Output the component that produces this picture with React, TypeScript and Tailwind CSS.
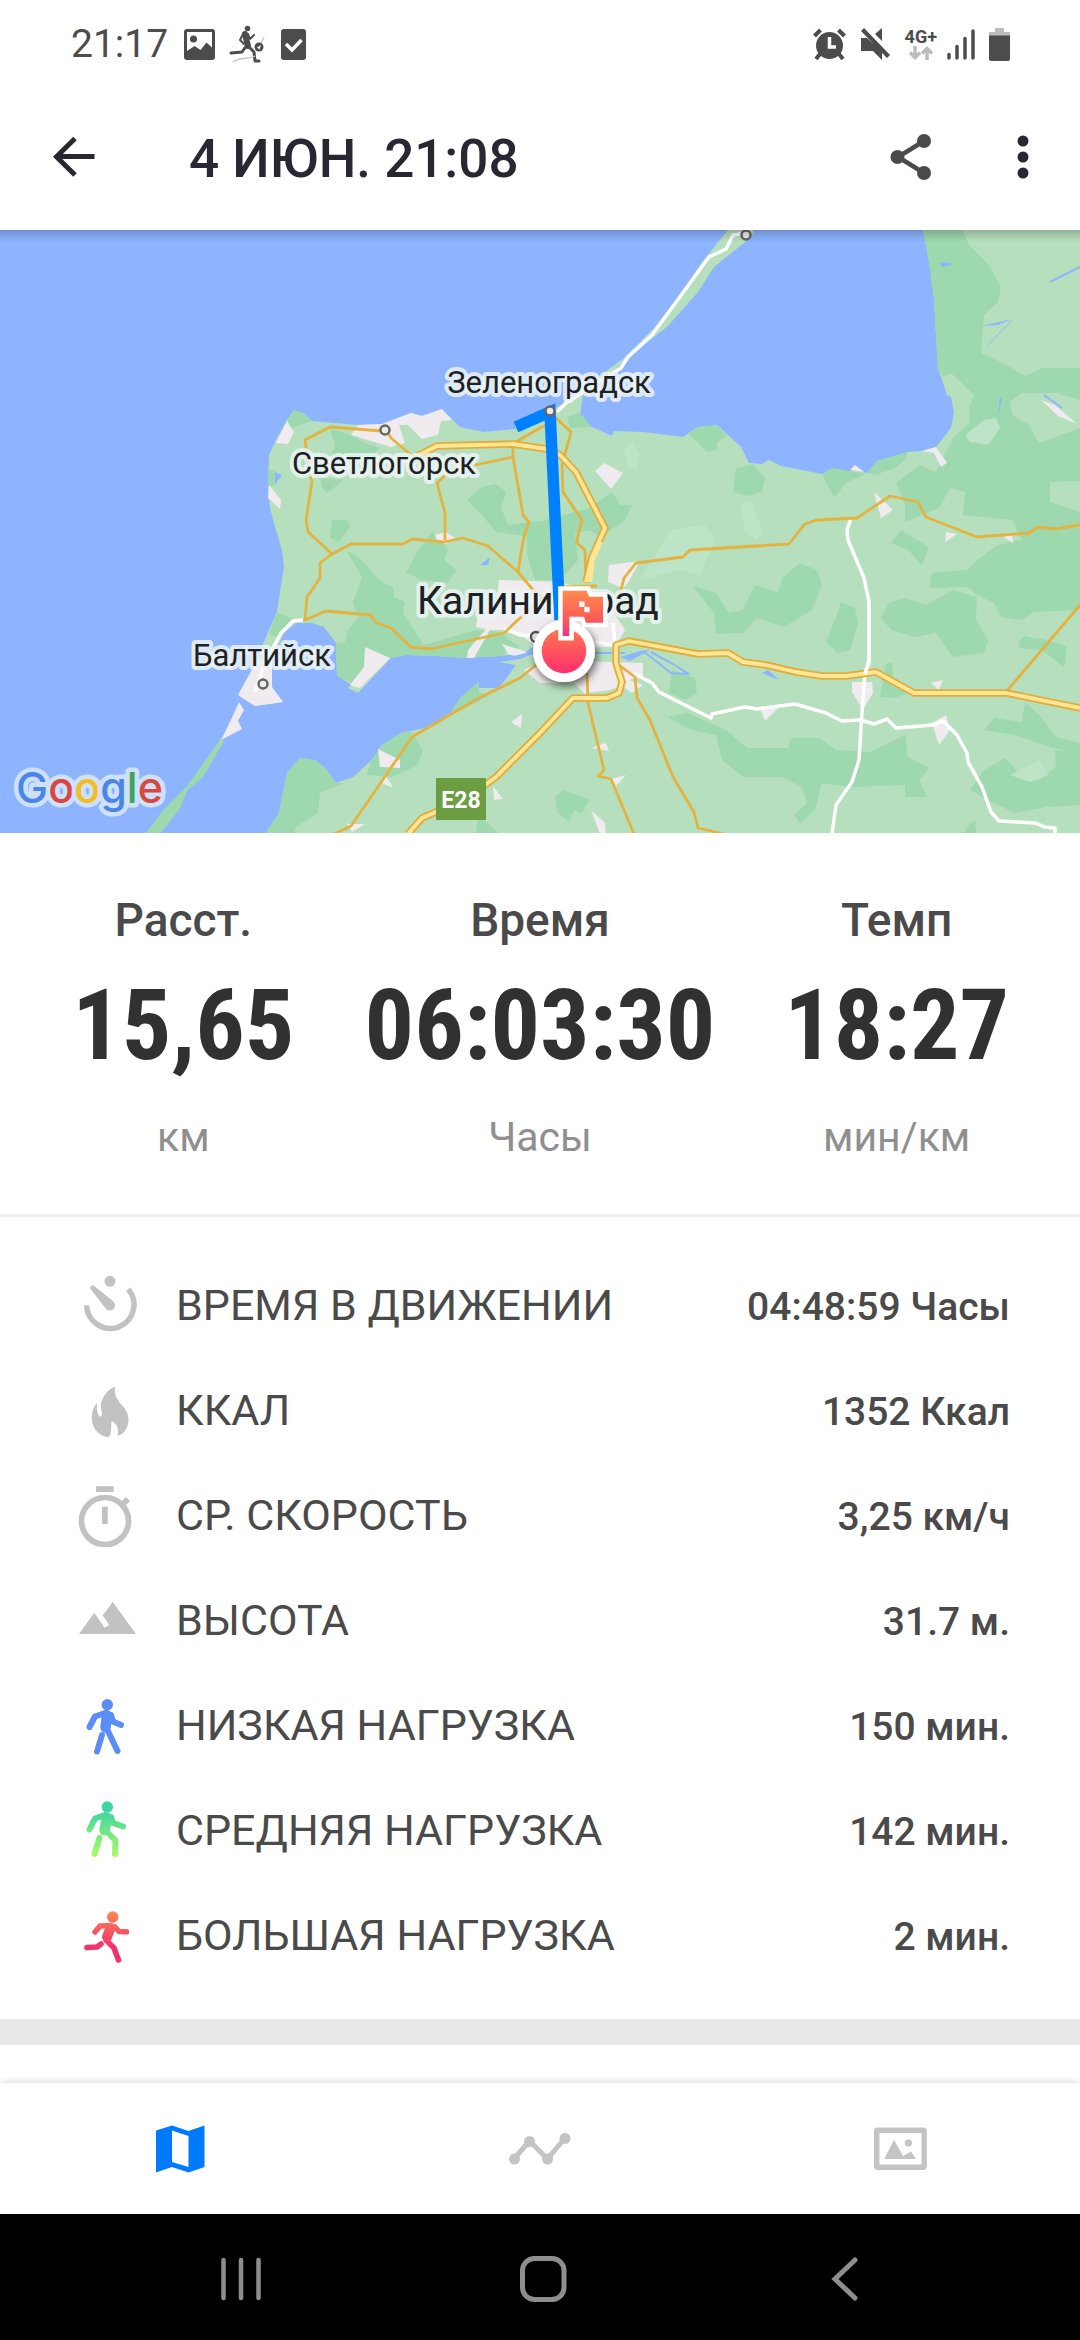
import React from 'react';

const FORESTS = [
  '294,180 303,183 312,191 296,196 287,203 288,190',
  '330,199 351,205 365,213 380,218 372,225 350,232 330,232 335,215',
  '482,257 496,254 506,262 501,278 508,295 530,292 555,290 550,310 496,302 482,285 467,270',
  '346,320 362,330 379,350 393,357 394,367 405,372 403,383 424,415 448,408 475,400 499,402 520,417 499,426 465,428 437,426 406,425 391,428 365,418 364,443 351,453 337,445 336,413 345,412 348,400 358,387 353,372 362,347',
  '417,322 432,302 439,308 448,320 444,330 456,340 448,353 422,350 406,343',
  '527,297 545,290 590,278 612,262 620,275 632,275 625,290 600,307 590,300 575,303 578,330 560,350 535,350 527,325',
  '688,203 698,197 717,195 727,206 717,212 717,220 707,222',
  '736,238 753,235 765,248 762,262 747,266 733,262',
  '822,244 833,238 855,242 865,244 846,253 834,268',
  '867,243 877,231 908,222 905,230 895,238 875,245',
  '923,0 962,0 969,15 989,35 1001,57 998,72 984,85 981,123 1003,133 1025,146 1043,138 1080,138 1080,170 1056,163 1022,163 1010,172 1012,185 1029,195 1039,213 1080,198 1080,251 1050,252 1050,272 1080,282 1080,380 1034,382 1022,390 1001,387 994,373 977,365 967,357 929,358 932,343 967,340 977,330 998,315 1022,310 1012,290 963,285 965,262 950,258 939,278 905,292 905,275 896,253 919,235 936,242 953,208 970,192 969,178 974,165 951,143 943,147 938,138 936,105 934,68 929,32',
  '783,347 800,333 817,340 822,355 812,380 784,397 757,388 743,403 716,404 714,383 693,356 716,363 729,383 743,380 755,355 778,362',
  '838,382 841,372 855,378 858,393 850,420 838,423 826,412',
  '881,388 889,373 905,368 926,375 953,360 977,367 976,390 988,410 984,423 953,427 936,403 915,407 891,400',
  '667,487 688,483 726,500 747,518 788,518 791,508 819,508 836,520 870,522 905,505 908,527 929,538 919,550 927,567 905,567 905,555 850,557 822,553 815,580 800,593 794,585 807,573 802,557 781,547 743,547 722,530 716,505 691,500',
  '672,440 695,448 697,463 685,470 669,463',
  '984,540 1005,528 1022,547 1039,550 1056,537 1055,520 1080,522 1080,575 1046,577 1015,583 988,570 970,560',
  '984,500 994,488 1022,492 1025,472 1041,487 1056,507 1080,513 1080,525 1050,517 1015,505',
  '1018,412 1024,406 1046,410 1067,416 1064,438 1055,430 1042,420 1020,418',
  '891,313 901,300 912,307 929,317 922,335 908,320',
  '880,467 886,433 892,433 893,447 912,462 895,468',
  '555,567 564,560 590,570 581,583 574,580 569,592 557,582',
  '265,604 279,583 287,543 300,528 315,530 325,538 336,553 344,553 320,563 318,583 296,597 294,604',
  '382,515 401,503 411,502 423,520 418,535 392,547 366,545 372,530',
  '451,482 461,467 479,452 479,462 488,466 462,480',
  '332,290 348,290 350,297 344,305 339,312 330,308',
  '320,248 344,250 327,263 322,258',
  '277,382 293,389 279,407 269,405',
  '268,238 276,242 274,256 268,256',
  '567,187 580,183 592,197 570,198',
  '478,585 486,592 500,604 476,604',
  '963,604 968,596 975,590 977,604',
];

const MEADOWS = [
  '965,205 984,190 996,188 1000,198 988,215 970,212',
  '740,275 752,272 762,300 757,310 745,302',
  '624,220 633,210 640,225 636,240 628,236',
  '670,300 705,295 715,310 700,345 680,340 640,350 660,318',
  '1010,545 1040,530 1048,545 1030,552',
];

const TOWNS = [
  '287,191 294,202 288,214 276,213',
  '358,195 382,194 411,183 422,186 442,179 452,190 441,191 438,205 422,209 408,195 399,195 405,213 391,217 351,205',
  '269,255 281,270 280,279 268,268',
  '499,350 560,352 590,360 612,380 625,400 615,417 540,418 520,405 510,400 490,400 474,428 467,428 468,420 486,399 476,397 478,385 495,383',
  '524,440 545,430 643,433 643,446 629,450 643,455 632,463 622,456 610,460 588,463 587,466 574,453 540,453',
  '502,414 527,422 518,427 508,424',
  '609,335 640,331 628,353 623,358 608,352',
  '604,233 623,243 611,259 595,241',
  '365,417 390,428 360,458 350,455 364,437',
  '378,519 400,530 400,538 380,537',
  '258,430 272,430 272,457 283,472 255,476 238,465',
  '852,452 872,452 873,463 863,480 852,462',
  '932,493 946,485 950,500 939,515',
  '874,262 893,280 881,288',
  '922,221 936,217 947,233 941,237 934,223',
  '760,478 781,475 765,491',
  '591,518 606,513 609,521',
  '611,549 626,545 616,556',
  '591,580 605,593 606,604 600,604',
  '511,492 522,484 521,498',
  '1041,170 1055,175 1077,194 1058,186',
  '850,240 855,235 864,242',
  '384,543 393,557 383,554',
  '493,556 503,569 494,570',
  '347,594 365,594 352,602',
  '435,305 446,302 455,308 446,314 437,311',
  '931,453 943,450 939,460',
  '946,302 957,304 945,312',
  '1004,307 1012,303 1013,313',
  '239,472 244,480 238,491 242,499 221,510 230,492',
];

const ROADS = [
  '382,201 330,197 305,210 308,235 312,252 306,290 308,302 332,324',
  '303,390 305,390 307,367 320,348 320,333 332,324 351,314 403,314 412,309 444,312 463,308 488,316 518,342 533,360 552,374',
  '388,203 391,208 411,225',
  '513,227 475,235 451,240 437,253 445,283 445,310',
  '513,216 513,227 523,285 529,292 525,303 522,317 518,342',
  '514,213 540,198 556,190',
  '555,187 571,202 562,235 563,262 582,290 578,305 577,313 585,320 586,353',
  '305,390 326,381 370,385 377,393 391,398 411,417 430,419 504,403 520,388 540,370 560,357 597,356',
  '536,435 520,448 479,468 412,507 351,596 334,604',
  '621,360 624,348 636,333 683,327 690,320 789,314 800,300 805,294 817,290 857,288 890,266 918,272 926,287 977,307 1029,303 1038,297 1055,299 1080,295',
  '1006,462 1080,375',
  '587,443 588,473 604,540 598,546 611,549 634,604',
  '619,435 635,447 637,468 650,490 673,547 694,582 698,598 724,604',
];

const HIGHWAYS = [
  '417,226 437,216 513,214 540,218 547,219 560,225 576,242 605,298 592,327 586,352',
  '408,604 422,588 436,582 485,555 496,547 540,503 573,468 607,468 619,463 622,452 616,433 616,415 629,411 698,424 728,423 743,432 766,435 796,442 822,446 846,446 876,442 914,463 1006,463 1080,478',
];

const WHITE_ROADS = [
  '557,182 566,173 621,138 628,127 652,105 709,27 726,19 733,5 746,3',
  '851,288 847,300 848,310 864,348 869,372 869,433 865,443 862,482 859,530 852,552 836,575 832,604',
  '633,443 652,453 659,462 711,488 712,484 745,477 757,479 795,474 826,483 842,491 860,490 874,494 887,489 896,498 933,495 943,491 957,505 967,523 968,532 982,557 991,582 999,591 1036,593 1044,597 1055,598 1055,604',
  '613,393 615,415 595,412',
  '255,462 265,433 281,403 293,391 303,390',
  '504,399 520,405 545,407',
];

const LAND =
  '294,180 303,183 312,191 358,195 382,194 411,183 422,186 442,179 460,197 484,202 516,199 535,192 555,178 561,175 605,142 624,128 654,98 678,68 702,32 728,0 753,0 753,3 750,8 714,37 698,62 667,97 654,107 626,130 609,145 583,165 580,185 592,197 612,206 614,201 643,202 683,207 698,197 717,195 741,217 749,233 762,234 769,230 781,236 822,244 833,238 843,243 855,240 867,243 877,231 908,222 922,221 936,217 951,198 954,183 951,167 947,165 938,138 936,105 934,68 929,32 923,0 1080,0 1080,604 265,604 279,583 287,543 300,528 315,530 325,538 336,553 353,547 372,530 382,515 401,503 430,497 451,482 461,467 479,452 479,458 499,458 516,435 499,432 520,429 533,424 536,415 524,423 499,426 465,428 437,426 406,425 391,428 358,463 348,458 351,455 337,445 336,413 324,397 312,393 296,393 284,403 272,430 272,457 283,472 255,476 238,465 255,433 269,400 277,382 284,337 282,320 276,300 270,278 268,255 269,225 277,208 287,190';

const PLACES = [
  { name: 'Зеленоградск', x: 549, y: 163, size: 'text-[31px]' },
  { name: 'Светлогорск', x: 384, y: 244, size: 'text-[31px]' },
  { name: 'Балтийск', x: 262, y: 436, size: 'text-[31px]' },
  { name: 'Калининград', x: 538, y: 384, size: 'text-[39px]' },
];

const RouteMap: React.FC = () => (
  <svg viewBox="0 0 1080 603" className="block w-full bg-[#8eb4ff]" role="img" aria-label="Карта">
    <defs>
      <linearGradient id="marker" x1="0" y1="0" x2="0" y2="1">
        <stop offset="0" stopColor="#ff7a4d" />
        <stop offset="1" stopColor="#ff2e6f" />
      </linearGradient>
      <linearGradient id="flag" x1="0" y1="0" x2="0" y2="1">
        <stop offset="0" stopColor="#ff8a4f" />
        <stop offset="0.6" stopColor="#fb5c55" />
        <stop offset="1" stopColor="#e8358a" />
      </linearGradient>
      <linearGradient id="topShade" x1="0" y1="0" x2="0" y2="1">
        <stop offset="0" stopColor="#000" stopOpacity="0.2" />
        <stop offset="1" stopColor="#000" stopOpacity="0" />
      </linearGradient>
      <filter id="drop" x="-30%" y="-30%" width="160%" height="160%">
        <feDropShadow dx="2" dy="4" stdDeviation="4" floodColor="#000" floodOpacity="0.6" />
      </filter>
    </defs>

    <polygon points={LAND} fill="#b6e0bd" />
    <polygon points="221,508 224,511 203,547 188,560 179,580 160,604 145,604 165,578 188,555 207,528" fill="#9dd8ae" />
    {FORESTS.map((p) => <polygon key={p} points={p} fill="#9dd8ae" />)}
    {MEADOWS.map((p) => <polygon key={p} points={p} fill="#bde4c6" />)}
    {TOWNS.map((p) => <polygon key={p} points={p} fill="#efebef" />)}

    <g fill="#8eb4ff">
      <polygon points="275,242 282,245 275,255" />
      <polygon points="480,335 490,327 488,335" />
      <polygon points="941,32 955,34 941,37" />
      <polygon points="762,443 768,440 779,450" />
      <polygon points="620,427 640,421 650,420 630,431" />
      <polygon points="982,96 1012,89 998,95" />
      <polygon points="1000,167 1002,168 998,188" />
    </g>
    <g fill="none" stroke="#8eb4ff" strokeWidth="2">
      <path d="M500 430l35-8M590 423h35M643 421l28 22 18 1-16-10-22-12" />
      <path d="M1050 52l30-15M1044 165l18 13" />
      <path d="M1012 90l-24 25" strokeWidth="1" />
    </g>

    <g fill="none" strokeLinejoin="round">
      {WHITE_ROADS.map((p) => <polyline key={p} points={p} stroke="#fff" strokeWidth="3.5" />)}
      {ROADS.map((p) => <polyline key={p} points={p} stroke="#e3b23f" strokeWidth="2.8" />)}
      {HIGHWAYS.map((p) => <polyline key={p} points={p} stroke="#e0ae3d" strokeWidth="7.5" />)}
      {HIGHWAYS.map((p) => <polyline key={p + 'in'} points={p} stroke="#ffe596" strokeWidth="3.8" />)}
      <path d="M590 352l3-22 8-18" stroke="#ffe596" strokeWidth="4" />
      <path d="M869 430l-4 14" stroke="#fff" strokeWidth="3.5" />
    </g>

    <rect x="436" y="548" width="50" height="42" fill="#6c9d42" />
    <text x="461" y="578" textAnchor="middle" className="fill-white font-['Roboto',sans-serif] text-[23px] font-bold">E28</text>

    <circle cx="536" cy="407" r="5" fill="#e8e8e8" stroke="#555" strokeWidth="2.5" />
    <g className="fill-[#1d2124] stroke-[#ecf4f4]/85 font-['Roboto',sans-serif]" strokeWidth="8" strokeLinejoin="round" paintOrder="stroke" textAnchor="middle">
      {PLACES.map((p) => (
        <text key={p.name} x={p.x} y={p.y} className={p.size}>{p.name}</text>
      ))}
    </g>

    <polyline points="516,197 550,182 560,390" fill="none" stroke="#0080ff" strokeWidth="11.5" />
    <g fill="#ececec" stroke="#666" strokeWidth="2.5">
      <circle cx="550" cy="181" r="4.5" />
      <circle cx="385" cy="200" r="4.5" />
      <circle cx="263" cy="454" r="4.5" />
      <circle cx="746" cy="5" r="4.5" />
    </g>

    <circle cx="564" cy="421" r="31" fill="#fff" filter="url(#drop)" />
    <circle cx="564" cy="421" r="22.3" fill="url(#marker)" />
    <path
      d="M562.7 360.7h24l2.3 6h14v26h-17l-2-6h-14.7V406h-6.6z"
      fill="url(#flag)"
      stroke="#fff"
      strokeWidth="9"
      paintOrder="stroke"
    />
    <path d="M579 371.5h5.5v5.3h5.2v5.4h-5.4v-5.2H579z" fill="#fff" fillOpacity="0.95" />

    <text
      x="16"
      y="573"
      className="stroke-[#cfe0fb] font-['Inter',sans-serif] text-[43px] font-medium"
      strokeWidth="9"
      strokeLinejoin="round"
      paintOrder="stroke"
    >
      <tspan fill="#4a86e8">G</tspan>
      <tspan fill="#d8483e">o</tspan>
      <tspan fill="#f2bc24">o</tspan>
      <tspan fill="#4a86e8">g</tspan>
      <tspan fill="#3fa45b">l</tspan>
      <tspan fill="#d8483e">e</tspan>
    </text>
    <rect width="1080" height="12" fill="url(#topShade)" />
  </svg>
);

const StatusBar: React.FC = () => (
  <div className="flex h-[84px] items-center justify-between pt-1 pr-[70px] pl-[71px] text-[#4c4c4c]">
    <div className="flex items-center">
      <span className="mr-4 text-[39px] leading-none">21:17</span>
      <svg className="mr-3.5 h-[31px] w-[31px]" viewBox="0 0 31 31" fill="currentColor">
        <path fillRule="evenodd" d="M3 0h25a3 3 0 0 1 3 3v25a3 3 0 0 1-3 3H3a3 3 0 0 1-3-3V3a3 3 0 0 1 3-3zm0 3v19l7.500-5 6 4 6-7.500 5.500 5V3z" />
        <circle cx="9.500" cy="10" r="3.500" />
      </svg>
      <svg className="mr-4 h-[38px] w-[36px]" viewBox="0 0 36 38">
        <circle cx="18.500" cy="3.500" r="2.800" fill="currentColor" />
        <g fill="none" stroke="currentColor" strokeLinecap="round" strokeLinejoin="round">
          <path d="M16 9l3 12" strokeWidth="6" />
          <path d="M14 9l-3 6 4 4M19 9l2 5 4-4" strokeWidth="2" />
          <path d="M18 20l-5 7-11 1M19 21l6 6 1 9h4" strokeWidth="3" />
        </g>
        <path d="M4 37c8-6 16-2 22-6M31 20l4-8" fill="none" stroke="#c8c8c8" strokeWidth="1.500" />
        <circle cx="30" cy="22" r="4.500" fill="currentColor" />
        <path d="M28 22.500l4-2.500-1.500 4.500z" fill="#fff" />
      </svg>
      <svg className="h-[31px] w-[25px]" viewBox="0 0 25 31">
        <rect width="25" height="31" rx="3" fill="currentColor" />
        <path d="M5 15l6 6 9.500-10" fill="none" stroke="#fff" strokeWidth="3.500" />
      </svg>
    </div>
    <div className="flex items-center">
      <svg className="mr-[15px] h-[32px] w-[33px]" viewBox="0 0 33 32">
        <circle cx="16.500" cy="17.500" r="13.500" fill="currentColor" />
        <path d="M1.500 8l6-6M31.500 8l-6-6M7 26l-4 5M26 26l4 5" stroke="currentColor" strokeWidth="4" />
        <path d="M16.500 9v10H23" fill="none" stroke="#fff" strokeWidth="3.500" />
      </svg>
      <svg className="mr-[15px] h-[32px] w-[29px]" viewBox="0 0 29 32" fill="currentColor">
        <path d="M0 10h6l15 14v8l-9-9H0zM14 6l7-6v13zM3 0l26 27-3 3L0 3z" />
      </svg>
      <div className="mr-2.5 flex flex-col items-center">
        <span className="text-[18px] leading-[18px] font-bold">4G+</span>
        <svg className="h-[14px] w-[24px]" viewBox="0 0 24 14" fill="none" stroke="#bcbcbc" strokeWidth="3.500">
          <path d="M6 0v11M1 6.500l5 5 5-5M18 14V3M13 7.500l5-5 5 5" />
        </svg>
      </div>
      <svg className="mr-3.5 h-[31px] w-[28px]" viewBox="0 0 28 31" stroke="currentColor" strokeWidth="3.500" strokeLinecap="round">
        <path d="M2 25.500v3.500M10 17.500V29M18 9.500V29M26 2v27" />
      </svg>
      <svg className="h-[33px] w-[21px]" viewBox="0 0 21 33">
        <path d="M6 0h9v4h6v5H0V4h6z" fill="#bdbdbd" />
        <path d="M0 7.500h21V31a2 2 0 0 1-2 2H2a2 2 0 0 1-2-2z" fill="currentColor" />
      </svg>
    </div>
  </div>
);

const Header: React.FC = () => (
  <header className="flex h-[146px] items-center pr-[43px] pl-[42px] text-[#282732]">
    <button type="button" aria-label="Назад" className="h-16 w-16">
      <svg viewBox="0 0 64 64" fill="none" stroke="currentColor" strokeWidth="5">
        <path d="M52.500 31.500H14M33 13.500l-18.500 18.200L33 50" />
      </svg>
    </button>
    <h1 className="ml-[83px] grow pt-1 text-[53px] leading-none font-medium">4 ИЮН. 21:08</h1>
    <button type="button" aria-label="Поделиться" className="mr-[66px] h-16 w-16 text-[#4a4a4a]">
      <svg viewBox="0 0 64 64" fill="currentColor">
        <path d="M45 16L19 32l26 16" fill="none" stroke="currentColor" strokeWidth="4.500" />
        <circle cx="45" cy="16" r="7" />
        <circle cx="18.500" cy="32" r="7" />
        <circle cx="45" cy="48" r="7" />
      </svg>
    </button>
    <button type="button" aria-label="Ещё" className="h-16 w-7">
      <svg viewBox="0 0 28 64" fill="currentColor">
        <circle cx="14" cy="16" r="5.500" />
        <circle cx="14" cy="32" r="5.500" />
        <circle cx="14" cy="48" r="5.500" />
      </svg>
    </button>
  </header>
);

const STATS = [
  { label: 'Расст.', value: '15,65', unit: 'км' },
  { label: 'Время', value: '06:03:30', unit: 'Часы' },
  { label: 'Темп', value: '18:27', unit: 'мин/км' },
];

const figure = {
  fill: 'none',
  strokeWidth: 6,
  strokeLinecap: 'round',
  strokeLinejoin: 'round',
} as const;

const DETAILS = [
  {
    label: 'ВРЕМЯ В ДВИЖЕНИИ',
    value: '04:48:59 Часы',
    icon: (
      <g fill="#c2c2c2">
        <circle cx="34" cy="8.300" r="5.500" />
        <path d="M10.600 32.300A23.700 23.700 0 1 0 52.300 16.300" fill="none" stroke="#c2c2c2" strokeWidth="5.500" />
        <path d="M18.300 13L37.500 28.500A5.300 5.300 0 0 1 30 36L15 16.500A2.400 2.400 0 0 1 18.300 13z" />
      </g>
    ),
  },
  {
    label: 'ККАЛ',
    value: '1352 Ккал',
    icon: (
      <path
        fill="#c2c2c2"
        d="M39 8.700C30 12 24 22 25 30C26 35 26.500 38 24.500 38.700C21 37 20.500 30 21.300 24.700C17 29 15.700 35 15.700 40.300C16 51 24 59 32.300 59C36 58 34.500 50 35.700 43C41 46 43.500 51 41.300 58C48 56 52.500 50 52.500 42C52.500 26 37.500 27 39 8.700z"
      />
    ),
  },
  {
    label: 'СР. СКОРОСТЬ',
    value: '3,25 км/ч',
    icon: (
      <g fill="none" stroke="#c2c2c2" strokeWidth="5.700">
        <circle cx="29" cy="38" r="23.500" />
        <path d="M20 6.200h17.700M28.900 23.700V41M45 23l7-7" />
      </g>
    ),
  },
  {
    label: 'ВЫСОТА',
    value: '31.7 м.',
    icon: <path fill="#c2c2c2" d="M3 46L18.300 24.700L28.500 39.700L33.300 37L26.700 27.500L36.700 14L60 46z" />,
  },
  {
    label: 'НИЗКАЯ НАГРУЗКА',
    value: '150 мин.',
    icon: (
      <g {...figure} stroke="#5b8df6">
        <circle cx="31.300" cy="11.700" r="5.700" fill="#5b8df6" stroke="none" />
        <path d="M13.500 34l5.500-10.500 10-3.500M35 22l2 6.500 8 3.500M31 36l10.500 22M26 42l-5 16.500" />
        <path d="M31 22.500l-1.500 12" strokeWidth="10.500" />
      </g>
    ),
  },
  {
    label: 'СРЕДНЯЯ НАГРУЗКА',
    value: '142 мин.',
    icon: (
      <g {...figure} stroke="url(#mid)">
        <circle cx="31.300" cy="9" r="5.700" fill="url(#mid)" stroke="none" />
        <path d="M13.500 31.500l5.500-11 10-3.500M35 19l2 6 10 3.500M30 33l9.500 9.500-.5 13.500M23.500 40l-5 16" />
        <path d="M31 20l-2.500 12" strokeWidth="10.500" />
      </g>
    ),
  },
  {
    label: 'БОЛЬШАЯ НАГРУЗКА',
    value: '2 мин.',
    icon: (
      <g {...figure} stroke="url(#high)">
        <circle cx="36.700" cy="14" r="5.700" fill="url(#high)" stroke="none" />
        <path d="M19 29l5-6 11-.5M39 24l4 4.500 7.500.3M30 37l8 8 4.500 12M11 44.500l10-.5 4-3" strokeWidth="5.500" />
        <path d="M34 26l-3 8" strokeWidth="10" />
      </g>
    ),
  },
];

const App: React.FC = () => (
  <div className="flex min-h-screen flex-col bg-white font-['Roboto',sans-serif]">
    <svg className="absolute h-0 w-0" aria-hidden="true">
      <defs>
        <linearGradient id="mid" gradientUnits="userSpaceOnUse" x1="0" y1="5" x2="0" y2="59">
          <stop offset="0.15" stopColor="#3ed6a0" />
          <stop offset="1" stopColor="#adfb62" />
        </linearGradient>
        <linearGradient id="high" gradientUnits="userSpaceOnUse" x1="0" y1="9" x2="0" y2="56">
          <stop offset="0" stopColor="#fb8650" />
          <stop offset="0.75" stopColor="#f4306f" />
        </linearGradient>
      </defs>
    </svg>

    <StatusBar />
    <Header />

    <main className="grow">
      <RouteMap />

      <section className="grid grid-cols-3 border-b-[3px] border-[#f0f0f0] px-[5px] pt-[61px] pb-[53px] text-center">
        {STATS.map((s) => (
          <div key={s.label}>
            <p className="text-[46px] leading-[52px] font-medium text-[#4a4a4a]">{s.label}</p>
            <p className="mt-5 font-['Roboto_Condensed','Roboto',sans-serif] text-[98px] leading-[120px] font-bold text-[#313132]">{s.value}</p>
            <p className="mt-[27px] text-[41px] leading-[48px] text-[#8f8f8f]">{s.unit}</p>
          </div>
        ))}
      </section>

      <ul className="pt-[35px] pr-[70px] pb-8 pl-[76px] text-[#4a4a4a]">
        {DETAILS.map((d) => (
          <li key={d.label} className="flex h-[105px] items-center">
            <svg className="mr-9 h-16 w-16 shrink-0" viewBox="0 0 64 64">{d.icon}</svg>
            <span className="grow text-[43px] leading-[48px]">{d.label}</span>
            <span className="pt-1 text-[39px] leading-[48px] font-medium">{d.value}</span>
          </li>
        ))}
      </ul>
      <div className="h-[26px] bg-[#e8e8e8]" />
    </main>

    <nav className="grid h-[131px] grid-cols-3 place-items-center shadow-[0_-2px_6px_rgba(0,0,0,0.12)]">
      <button type="button" aria-label="Карта" className="h-16 w-16">
        <svg viewBox="0 0 64 64">
          <path fill="#007aff" fillRule="evenodd" d="M8 13.500L24 8.500L40.500 14L56.500 8.500V50L40.500 55.500L24 50L8 55.500zM24 13.500V45L40.500 50V19z" />
        </svg>
      </button>
      <button type="button" aria-label="Графики" className="h-16 w-16">
        <svg viewBox="0 0 64 64" fill="#c4c4c4">
          <path d="M5.800 42L21.600 24L39.500 42L56.500 21.500" fill="none" stroke="#c4c4c4" strokeWidth="5" />
          <circle cx="6.500" cy="42" r="5.500" />
          <circle cx="21.600" cy="24.500" r="5.500" />
          <circle cx="39.500" cy="42" r="5.500" />
          <circle cx="57" cy="21.500" r="5.500" />
        </svg>
      </button>
      <button type="button" aria-label="Фото" className="h-16 w-16">
        <svg viewBox="0 0 64 64" fill="#c4c4c4">
          <rect x="8.700" y="13.200" width="47.500" height="37" rx="1" fill="none" stroke="#c4c4c4" strokeWidth="5.400" />
          <path d="M16.300 42L26 23L35 39L43 34.500L48 42z" />
          <circle cx="40.400" cy="26" r="3.600" />
        </svg>
      </button>
    </nav>

    <footer className="grid h-[126px] grid-cols-3 place-items-center bg-black pt-1 pr-[84px] pl-[90px]">
      <button type="button" aria-label="Недавние" className="h-12 w-12">
        <svg viewBox="0 0 48 48" stroke="#8e8e8e" strokeWidth="4.500" strokeLinecap="round">
          <path d="M6.500 5v38M24 5v38M41.500 5v38" />
        </svg>
      </button>
      <button type="button" aria-label="Домой" className="h-12 w-12">
        <svg viewBox="0 0 48 48" fill="none" stroke="#8e8e8e" strokeWidth="5">
          <rect x="3.500" y="3.500" width="41.500" height="41" rx="12" />
        </svg>
      </button>
      <button type="button" aria-label="Назад" className="h-12 w-12">
        <svg viewBox="0 0 48 48" fill="none" stroke="#8e8e8e" strokeWidth="5" strokeLinecap="round">
          <path d="M34 5L14 24l20 19" />
        </svg>
      </button>
    </footer>
  </div>
);

export default App;
